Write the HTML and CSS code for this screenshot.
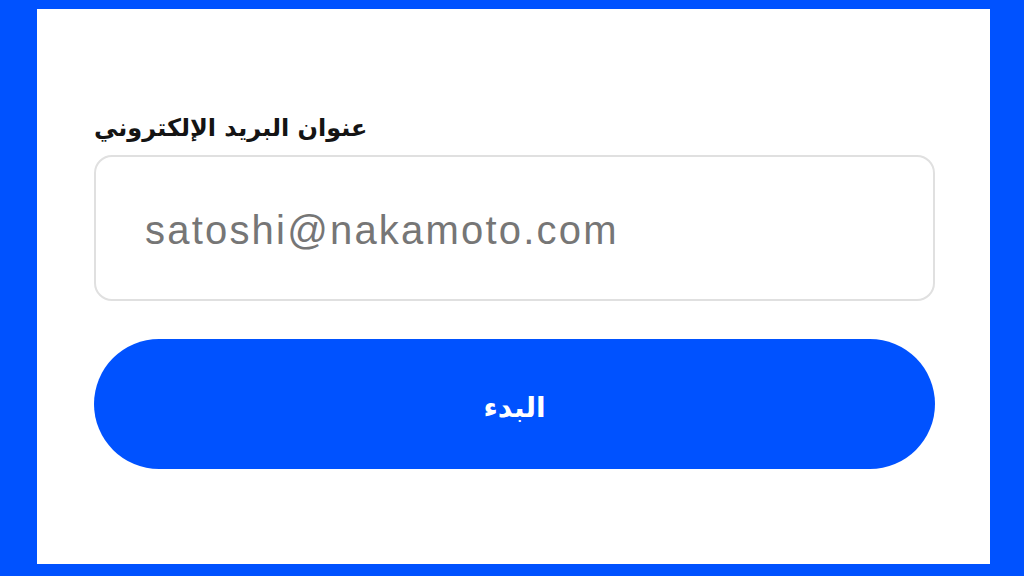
FILE: index.html
```html
<!DOCTYPE html>
<html lang="ar">
<head>
<meta charset="utf-8">
<link rel="stylesheet" href="styles.css">
</head>
<body>
<div class="frame">
  <div class="panel">
    <form class="form">
      <label class="label" for="email" dir="rtl">عنوان البريد الإلكتروني</label>
      <input class="input" id="email" type="email" placeholder="satoshi@nakamoto.com">
      <button class="btn" type="button">البدء</button>
    </form>
  </div>
</div>
</body>
</html>
```
FILE: styles.css
```css
html, body {
  margin: 0;
  padding: 0;
  width: 1024px;
  height: 576px;
  overflow: hidden;
  background: #0052ff;
}
.frame {
  padding: 9px 34px 12px 37px;
  height: 576px;
  box-sizing: border-box;
}
.panel {
  background: #ffffff;
  height: 100%;
  box-sizing: border-box;
  padding: 96px 55px 0 57px;
}
.form {
  display: flex;
  flex-direction: column;
  align-items: stretch;
}
.label {
  align-self: flex-start;
  font-family: "DejaVu Sans", sans-serif;
  font-weight: bold;
  font-size: 24px;
  line-height: 46px;
  color: #141414;
  margin-bottom: 4px;
}
.input {
  height: 146px;
  box-sizing: border-box;
  border: 2px solid #e0e0e0;
  border-radius: 18px;
  padding: 4px 0 0 49px;
  font-family: "Liberation Sans", Arial, sans-serif;
  font-size: 40px;
  letter-spacing: 2.2px;
  color: #222;
  background: #fff;
  outline: none;
  margin: 0;
}
.input::placeholder {
  color: #767676;
}
.btn {
  margin-top: 38px;
  height: 130px;
  border: none;
  border-radius: 65px;
  background: #0052ff;
  color: #ffffff;
  font-family: "DejaVu Sans", sans-serif;
  font-weight: bold;
  font-size: 28px;
  padding: 6px 0 0 0;
  cursor: pointer;
}
```
